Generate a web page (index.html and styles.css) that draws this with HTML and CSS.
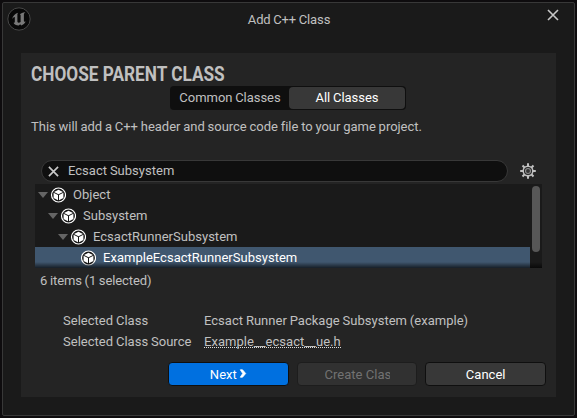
FILE: index.html
```html
<!DOCTYPE html>
<html lang="en">
<head>
<meta charset="utf-8">
<title>Add C++ Class</title>
<link rel="stylesheet" href="styles.css">
</head>
<body>
<svg class="defs" width="0" height="0" aria-hidden="true">
  <symbol id="object" viewBox="0 0 16 16">
    <circle cx="8.5" cy="8" r="7" fill="#151515" stroke="#fff" stroke-width="1.2"/>
    <path d="M8.5 2.8 13 5 8.5 7.2 4 5ZM3.6 5.8 8 8V13.2L3.6 11ZM13.4 5.8 9 8V13.2L13.4 11Z" fill="#fff"/>
  </symbol>
  <symbol id="arrow" viewBox="0 0 10 6"><path d="M0 0H10L5 6Z" fill="#656565"/></symbol>
</svg>
<main class="window">
  <header class="titlebar">
    <svg class="logo" viewBox="0 0 24 24">
      <circle cx="12" cy="12" r="11.2" fill="#080808" stroke="#484848" stroke-width="1"/>
      <path d="M5 12.2C6 8.8 8.2 6.5 11.2 5.8 10.2 6.8 10.4 7.3 10.4 8V14.8C10.8 16 12.3 16.1 13.6 15V8.2C13.6 7.5 13.2 7.2 12.7 7.5 13.7 6.3 15.8 5.5 18.4 5.3 17.1 6.2 16.9 6.8 16.9 7.8V14.1C17 15.1 17.8 15.1 18.8 14.2 17.8 16.4 16.2 17.8 14.3 18.4L13.2 17.2 11.8 18.5C9.3 18.6 7.4 17.5 6.5 15.7 7.4 16.1 7.8 15.7 7.8 14.8V10.3C7.6 9.4 6.4 10.4 5 12.2Z" fill="#787878"/>
    </svg>
    <span class="title">Add C++ Class</span>
    <svg class="close" viewBox="0 0 12 12"><path d="M1 1 11 11M11 1 1 11" stroke="#c8c8c8" stroke-width="1.6"/></svg>
  </header>
  <section class="panel">
    <h1><span>CHOOSE PARENT CLASS</span></h1>
    <div class="tabs"><span class="tab">Common Classes</span><span class="tab active">All Classes</span></div>
    <p class="desc">This will add a C++ header and source code file to your game project.</p>
    <div class="searchrow">
      <div class="search">
        <svg viewBox="0 0 12 12"><path d="M1 1 11 11M11 1 1 11" stroke="#c8c8c8" stroke-width="1.8"/></svg>
        <span>Ecsact Subsystem</span>
      </div>
      <svg class="gear" viewBox="0 0 16 16">
        <g stroke="#c0c0c0" stroke-width="2"><path d="M8 .2V3M8 13V15.8M.2 8H3M13 8H15.8M2.5 2.5 4.7 4.7M11.3 11.3 13.5 13.5M2.5 13.5 4.7 11.3M11.3 4.7 13.5 2.5"/></g>
        <circle cx="8" cy="8" r="4.8" fill="#242424" stroke="#c0c0c0" stroke-width="1.5"/>
        <circle cx="8" cy="8" r="2.5" fill="#333" stroke="#8c8c8c" stroke-width="1.1"/>
      </svg>
    </div>
    <div class="tree">
      <div class="rows">
        <div class="row l0"><svg class="arrow"><use href="#arrow"/></svg><svg class="obj"><use href="#object"/></svg><span>Object</span></div>
        <div class="row l1"><svg class="arrow"><use href="#arrow"/></svg><svg class="obj"><use href="#object"/></svg><span>Subsystem</span></div>
        <div class="row l2"><svg class="arrow"><use href="#arrow"/></svg><svg class="obj"><use href="#object"/></svg><span>EcsactRunnerSubsystem</span></div>
        <div class="row l3 selected"><svg class="arrow"></svg><svg class="obj"><use href="#object"/></svg><span>ExampleEcsactRunnerSubsystem</span></div>
      </div>
      <div class="thumb"></div>
    </div>
    <div class="count">6 items (1 selected)</div>
    <dl class="info">
      <dt>Selected Class</dt><dd>Ecsact Runner Package Subsystem (example)</dd>
      <dt>Selected Class Source</dt><dd><span class="link">Example__ecsact__ue.h</span></dd>
    </dl>
    <footer class="actions">
      <button class="btn primary"><span>Next</span><svg viewBox="0 0 7 9"><path d="M.8 .8H3L6.2 4.5 3 8.2H.8L3.2 4.5Z" fill="#fff" stroke="#fff" stroke-width=".8"/></svg></button>
      <button class="btn disabled"><span class="clip">Create Class</span></button>
      <button class="btn">Cancel</button>
    </footer>
  </section>
</main>
</body>
</html>
```
FILE: styles.css
```css
* { box-sizing: border-box; }
body {
  margin: 0;
  width: 577px;
  height: 418px;
  padding: 2px;
  overflow: hidden;
  background: #0e0c0e;
  color: #c0c0c0;
  font: 13px/21px Roboto, "Liberation Sans", sans-serif;
  letter-spacing: .02px;
  word-spacing: -.4px;
  white-space: nowrap;
}
.defs { position: absolute; }
svg { display: block; flex: none; }
.window {
  width: 573px;
  height: 414px;
  border: 1px solid #383838;
  border-radius: 2px;
  background: #1a1a1a;
}
.titlebar {
  display: grid;
  grid-template-columns: 80px 1fr 80px;
  height: 50px;
}
.logo { width: 24px; height: 24px; margin: 4px 0 0 4px; }
.title { text-align: center; margin-top: 6px; padding-left: 1px; letter-spacing: -.13px; }
.close { width: 12px; height: 12px; margin: 6px 0 0 53px; }
.panel {
  width: 535px;
  height: 344px;
  margin-left: 18px;
  padding: 9px 10px 0;
  background: #242424;
}
h1 {
  height: 24px;
  margin: 0;
  font-size: 20.5px;
  line-height: 24px;
  font-weight: 700;
  letter-spacing: 0;
  word-spacing: 0;
}
h1 span { display: inline-block; transform: scaleX(.84); transform-origin: left; }
.tabs {
  display: flex;
  width: 236px;
  height: 24px;
  margin-left: 139px;
  padding: 1px;
  border-radius: 4px;
  background: #0f0f0f;
}
.tab { width: 118px; line-height: 22px; text-align: center; letter-spacing: -.04px; }
.tab.active { width: 116px; border-radius: 4px; background: #383838; color: #fff; }
.desc { margin: 6px 0 0; letter-spacing: -.02px; }
.searchrow { display: flex; align-items: center; margin: 23px 0 0 10px; }
.search {
  display: flex;
  align-items: center;
  width: 467px;
  height: 22px;
  padding-left: 6px;
  gap: 9px;
  border: 1px solid #383838;
  border-radius: 11px;
  background: #0f0f0f;
}
.search svg { width: 11px; height: 11px; }
.search span { position: relative; top: -1px; }
.gear { width: 16px; height: 16px; margin-left: 12px; }
.tree {
  position: relative;
  display: flex;
  gap: 2px;
  width: 507px;
  height: 84px;
  margin: 2px 0 0 4px;
  background: #1a1a1a;
}
.tree::after {
  content: "";
  position: absolute;
  inset: auto 0 0;
  height: 6px;
  background: linear-gradient(transparent, rgba(0, 0, 0, .65));
}
.rows { width: 495px; }
.row { display: flex; align-items: center; height: 21px; padding-left: 3px; }
.l1 { padding-left: 13px; }
.l2 { padding-left: 23px; }
.l3 { padding-left: 33px; }
.selected { background: #40576f; color: #fff; }
.arrow { width: 10px; height: 6px; }
.obj { width: 16px; height: 16px; margin: 0 7px 0 2px; }
.thumb { width: 8px; height: 66px; margin-top: 2px; border-radius: 4px; background: #575757; }
.count { margin: 2px 0 0 4px; letter-spacing: -.1px; }
.info {
  display: grid;
  grid-template-columns: 141px 1fr;
  margin: 19px 0 0 32px;
}
.info dd { margin: 0; }
.link {
  display: inline-block;
  height: 17px;
  line-height: 21px;
  vertical-align: top;
  border-bottom: 1px dotted #ddd;
}
.count { margin-left: 9px; }
.actions { display: flex; gap: 8px; margin: 10px 0 0 137px; }
.btn {
  display: flex;
  align-items: center;
  justify-content: center;
  width: 121px;
  height: 24px;
  padding: 0;
  border: 1px solid #0f0f0f;
  border-radius: 4px;
  background: #383838;
  color: #fff;
  font: inherit;
  letter-spacing: inherit;
}
.primary { background: #0070e0; }
.primary svg { width: 8px; height: 9px; margin: 0 0 1px 2px; }
.disabled { background: #313131; border-color: #1d1d1d; color: #727272; }
.clip { width: 65px; overflow: hidden; text-align: left; }
```
